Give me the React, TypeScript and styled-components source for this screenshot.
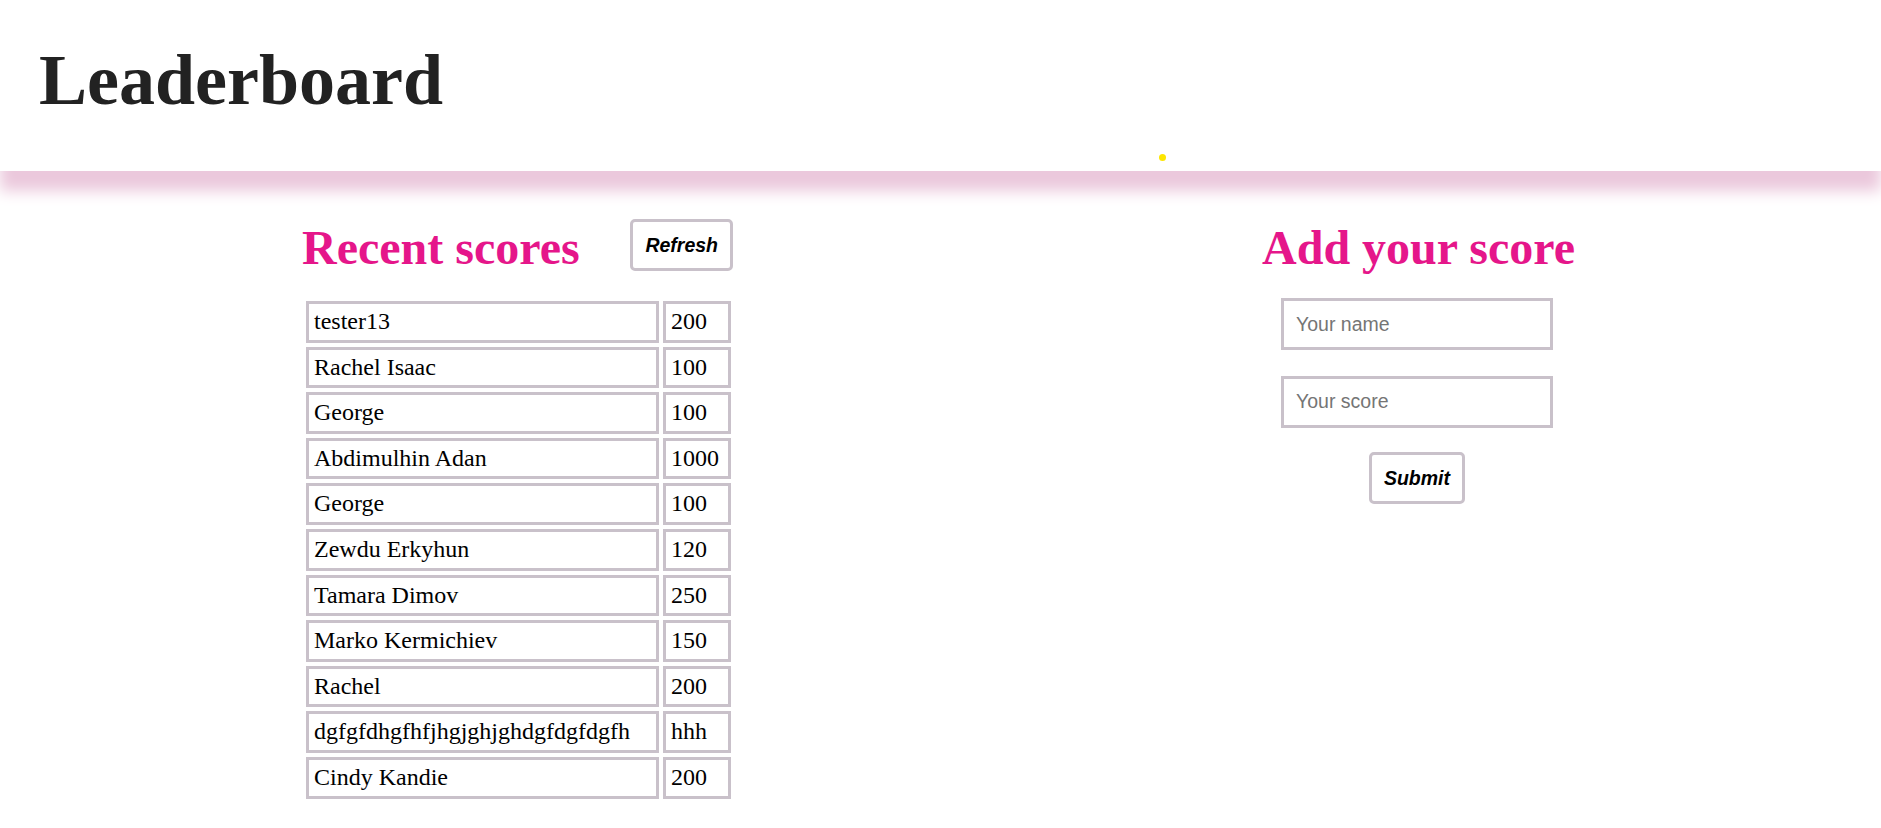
import React from "react";
import styled, { createGlobalStyle } from "styled-components";

const GlobalStyle = createGlobalStyle`
  html, body {
    margin: 0;
    padding: 0;
    background: #ffffff;
    font-family: "Liberation Serif", "Times New Roman", serif;
  }
`;

const Page = styled.div`
  min-height: 828px;
  background: #ffffff;
`;

const Header = styled.header`
  position: relative;
  z-index: 1;
  height: 171px;
  box-sizing: border-box;
  padding: 40.8px 0 0 39px;
  background: #ffffff;
  box-shadow: 0 20px 14px #ebc8dc;
`;

const Title = styled.h1`
  margin: 0;
  font-family: "Liberation Serif", "Times New Roman", serif;
  font-weight: 700;
  font-size: 72px;
  line-height: 79.7px;
  color: #222222;
`;

const Dot = styled.span`
  position: absolute;
  left: 1158.5px;
  top: 153.5px;
  width: 7px;
  height: 7px;
  border-radius: 50%;
  background: #fde600;
`;

const Main = styled.main`
  display: grid;
  grid-template-columns: 433px 400px;
  column-gap: 483.5px;
  padding: 49.5px 0 0 302px;
`;

const Column = styled.section`
  display: flex;
  flex-direction: column;
`;

const CenterColumn = styled(Column)`
  align-items: center;
`;

const HeadRow = styled.div`
  display: flex;
  align-items: center;
  justify-content: space-between;
  height: 53.1px;
  margin-bottom: 23.5px;
`;

const Heading = styled.h2`
  margin: 0;
  font-family: "Liberation Serif", "Times New Roman", serif;
  font-weight: 700;
  font-size: 48px;
  line-height: 53.1px;
  color: #e5168a;
  white-space: nowrap;
`;

const Button = styled.button<{ $trail?: number; $lift?: number }>`
  box-sizing: border-box;
  height: 52px;
  padding: 0 12px;
  margin-right: ${(p) => p.$trail ?? 0}px;
  margin-bottom: ${(p) => p.$lift ?? 0}px;
  border: 3px solid #c9c1ca;
  border-radius: 5px;
  background: #ffffff;
  font-family: "Liberation Sans", Arial, sans-serif;
  font-weight: 700;
  font-style: italic;
  font-size: 19.5px;
  color: #000000;
  cursor: pointer;
`;

const Table = styled.table`
  border-collapse: separate;
  border-spacing: 4px;
`;

const Cell = styled.td<{ $w: number }>`
  width: ${(p) => p.$w}px;
  padding: 4px 5px;
  border: 3px solid #c9c1ca;
  font-family: "Liberation Serif", "Times New Roman", serif;
  font-size: 24px;
  line-height: 27.6px;
  color: #000000;
  white-space: nowrap;
`;

const Input = styled.input<{ $top: number }>`
  box-sizing: border-box;
  width: 272px;
  height: 52px;
  margin: ${(p) => p.$top}px 3px 0 0;
  padding: 0 12px;
  border: 3px solid #c9c1ca;
  border-radius: 0;
  outline: none;
  font-family: "Liberation Sans", Arial, sans-serif;
  font-size: 19.5px;
  color: #000000;
  &::placeholder {
    color: #757575;
  }
`;

const SubmitWrap = styled.div`
  margin: 24.6px 3px 0 0;
`;

const scores: [string, string][] = [
  ["tester13", "200"],
  ["Rachel Isaac", "100"],
  ["George", "100"],
  ["Abdimulhin Adan", "1000"],
  ["George", "100"],
  ["Zewdu Erkyhun", "120"],
  ["Tamara Dimov", "250"],
  ["Marko Kermichiev", "150"],
  ["Rachel", "200"],
  ["dgfgfdhgfhfjhgjghjghdgfdgfdgfh", "hhh"],
  ["Cindy Kandie", "200"],
];

export default function App() {
  return (
    <Page>
      <GlobalStyle />
      <Header>
        <Title>Leaderboard</Title>
        <Dot />
      </Header>
      <Main>
        <Column>
          <HeadRow>
            <Heading>Recent scores</Heading>
            <Button $trail={2} $lift={4}>
              Refresh
            </Button>
          </HeadRow>
          <Table>
            <tbody>
              {scores.map(([name, score], i) => (
                <tr key={i}>
                  <Cell $w={337}>{name}</Cell>
                  <Cell $w={52}>{score}</Cell>
                </tr>
              ))}
            </tbody>
          </Table>
        </Column>
        <CenterColumn>
          <Heading>Add your score</Heading>
          <Input $top={24.7} placeholder="Your name" />
          <Input $top={25.4} placeholder="Your score" />
          <SubmitWrap>
            <Button>Submit</Button>
          </SubmitWrap>
        </CenterColumn>
      </Main>
    </Page>
  );
}
